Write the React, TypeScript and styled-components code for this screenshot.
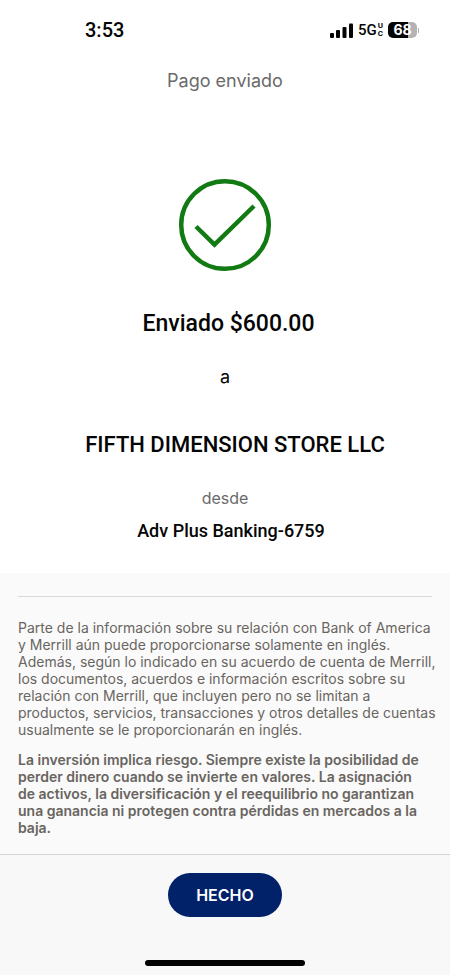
import React from "react";
import styled, { createGlobalStyle } from "styled-components";

const GlobalStyle = createGlobalStyle`
  * { box-sizing: border-box; }
  body {
    margin: 0;
    background: #fff;
    color: #050505;
    font-family: Inter, "Liberation Sans", sans-serif;
  }
  h1, h2, p { margin: 0; }
`;

const Screen = styled.div`
  display: flex;
  flex-direction: column;
  min-height: 100vh;
`;

const StatusBar = styled.div`
  display: flex;
  align-items: center;
  justify-content: space-between;
  padding: 18px 31px 0 85px;
  height: 42px;
`;

const Clock = styled.time`
  font: 500 20px/24px Roboto, sans-serif;
`;

const StatusIcons = styled.div`
  display: flex;
  align-items: center;
  gap: 5px;
`;

const Network = styled.span`
  display: flex;
  align-items: center;
  gap: 1px;
  font: 500 15px/20px Roboto, sans-serif;
`;

const Carrier = styled.span`
  display: flex;
  flex-direction: column;
  font: 700 8px/8px Roboto, sans-serif;
`;

const Battery = styled.span`
  display: flex;
  align-items: center;
  gap: 1px;
`;

const BatteryBody = styled.span`
  width: 29px;
  height: 16px;
  border-radius: 5px;
  background: linear-gradient(90deg, #050505 68%, #b4b4b4 68%);
  color: #fff;
  font: 700 14px/16px Inter, sans-serif;
  text-align: center;
`;

const BatteryTip = styled.span`
  width: 1px;
  height: 5px;
  background: #b4b4b4;
`;

const Header = styled.header`
  padding: 27px 16px 0;
  text-align: center;
`;

const Title = styled.h1`
  color: #6a6a6a;
  font: 400 18px/24px Inter, sans-serif;
`;

const Receipt = styled.main`
  display: flex;
  flex-direction: column;
  align-items: center;
  padding: 85px 16px 30px;
  text-align: center;
`;

const SuccessIcon = styled.svg`
  width: 94px;
  height: 94px;
`;

const Amount = styled.h2`
  margin-top: 37px;
  padding-left: 7px;
  font: 500 23px/30px Roboto, sans-serif;
`;

const Connector = styled.p`
  margin-top: 26px;
  font: 400 18px/24px Inter, sans-serif;
`;

const Recipient = styled.p`
  margin-top: 41px;
  padding-left: 20px;
  font: 500 22px/30px Roboto, sans-serif;
`;

const Source = styled.p`
  margin-top: 26px;
  color: #6a6a6a;
  font: 400 16px/24px Inter, sans-serif;
`;

const Account = styled.p`
  margin-top: 9px;
  padding-left: 12px;
  font: 500 18px/24px Roboto, sans-serif;
`;

const Disclosures = styled.section`
  flex: 1;
  padding: 23px 18px 17px;
  background: #fafafa;
`;

const Divider = styled.hr`
  height: 1px;
  margin: 0 0 22px;
  border: 0;
  background: #d9d9d9;
`;

const Disclosure = styled.p<{ $strong?: boolean }>`
  margin-right: -10px;
  color: #69655f;
  font-size: 14px;
  line-height: 17px;
  font-weight: ${({ $strong }) => ($strong ? 600 : 400)};

  & + & { margin-top: 13px; }
`;

const Footer = styled.footer`
  display: flex;
  flex-direction: column;
  align-items: center;
  gap: 43px;
  padding: 18px 16px 9px;
  border-top: 1px solid #d2d2d2;
  background: #f8f8f8;
`;

const DoneButton = styled.button`
  height: 44px;
  padding: 0 28px;
  border: 0;
  border-radius: 22px;
  background: #012169;
  color: #fff;
  font: 600 16px/20px Inter, sans-serif;
  cursor: pointer;
`;

const HomeIndicator = styled.div`
  width: 160px;
  height: 6px;
  border-radius: 3px;
  background: #000;
`;

export default function App() {
  return (
    <Screen>
      <GlobalStyle />
      <StatusBar>
        <Clock>3:53</Clock>
        <StatusIcons>
          <svg width="23" height="15" viewBox="0 0 23 15" fill="#050505" aria-hidden="true">
            <rect x="0" y="10" width="4" height="5" rx="1" />
            <rect x="6" y="7" width="4" height="8" rx="1" />
            <rect x="12.5" y="4" width="4" height="11" rx="1" />
            <rect x="19" y="0.5" width="4" height="14.5" rx="1" />
          </svg>
          <Network>
            5G
            <Carrier>
              <span>U</span>
              <span>C</span>
            </Carrier>
          </Network>
          <Battery>
            <BatteryBody>68</BatteryBody>
            <BatteryTip />
          </Battery>
        </StatusIcons>
      </StatusBar>
      <Header>
        <Title>Pago enviado</Title>
      </Header>
      <Receipt>
        <SuccessIcon viewBox="0 0 94 94" fill="none" stroke="#127a12" strokeWidth="4.5" aria-hidden="true">
          <circle cx="47" cy="47" r="43.8" />
          <path d="M18 48.5 36.5 66.5 76 28" />
        </SuccessIcon>
        <Amount>Enviado $600.00</Amount>
        <Connector>a</Connector>
        <Recipient>FIFTH DIMENSION STORE LLC</Recipient>
        <Source>desde</Source>
        <Account>Adv Plus Banking-6759</Account>
      </Receipt>
      <Disclosures>
        <Divider />
        <Disclosure>
          Parte de la información sobre su relación con Bank of America
          <br />
          y Merrill aún puede proporcionarse solamente en inglés.
          <br />
          Además, según lo indicado en su acuerdo de cuenta de Merrill,
          <br />
          los documentos, acuerdos e información escritos sobre su
          <br />
          relación con Merrill, que incluyen pero no se limitan a
          <br />
          productos, servicios, transacciones y otros detalles de cuentas
          <br />
          usualmente se le proporcionarán en inglés.
        </Disclosure>
        <Disclosure $strong>
          La inversión implica riesgo. Siempre existe la posibilidad de
          <br />
          perder dinero cuando se invierte en valores. La asignación
          <br />
          de activos, la diversificación y el reequilibrio no garantizan
          <br />
          una ganancia ni protegen contra pérdidas en mercados a la
          <br />
          baja.
        </Disclosure>
      </Disclosures>
      <Footer>
        <DoneButton type="button">HECHO</DoneButton>
        <HomeIndicator />
      </Footer>
    </Screen>
  );
}
